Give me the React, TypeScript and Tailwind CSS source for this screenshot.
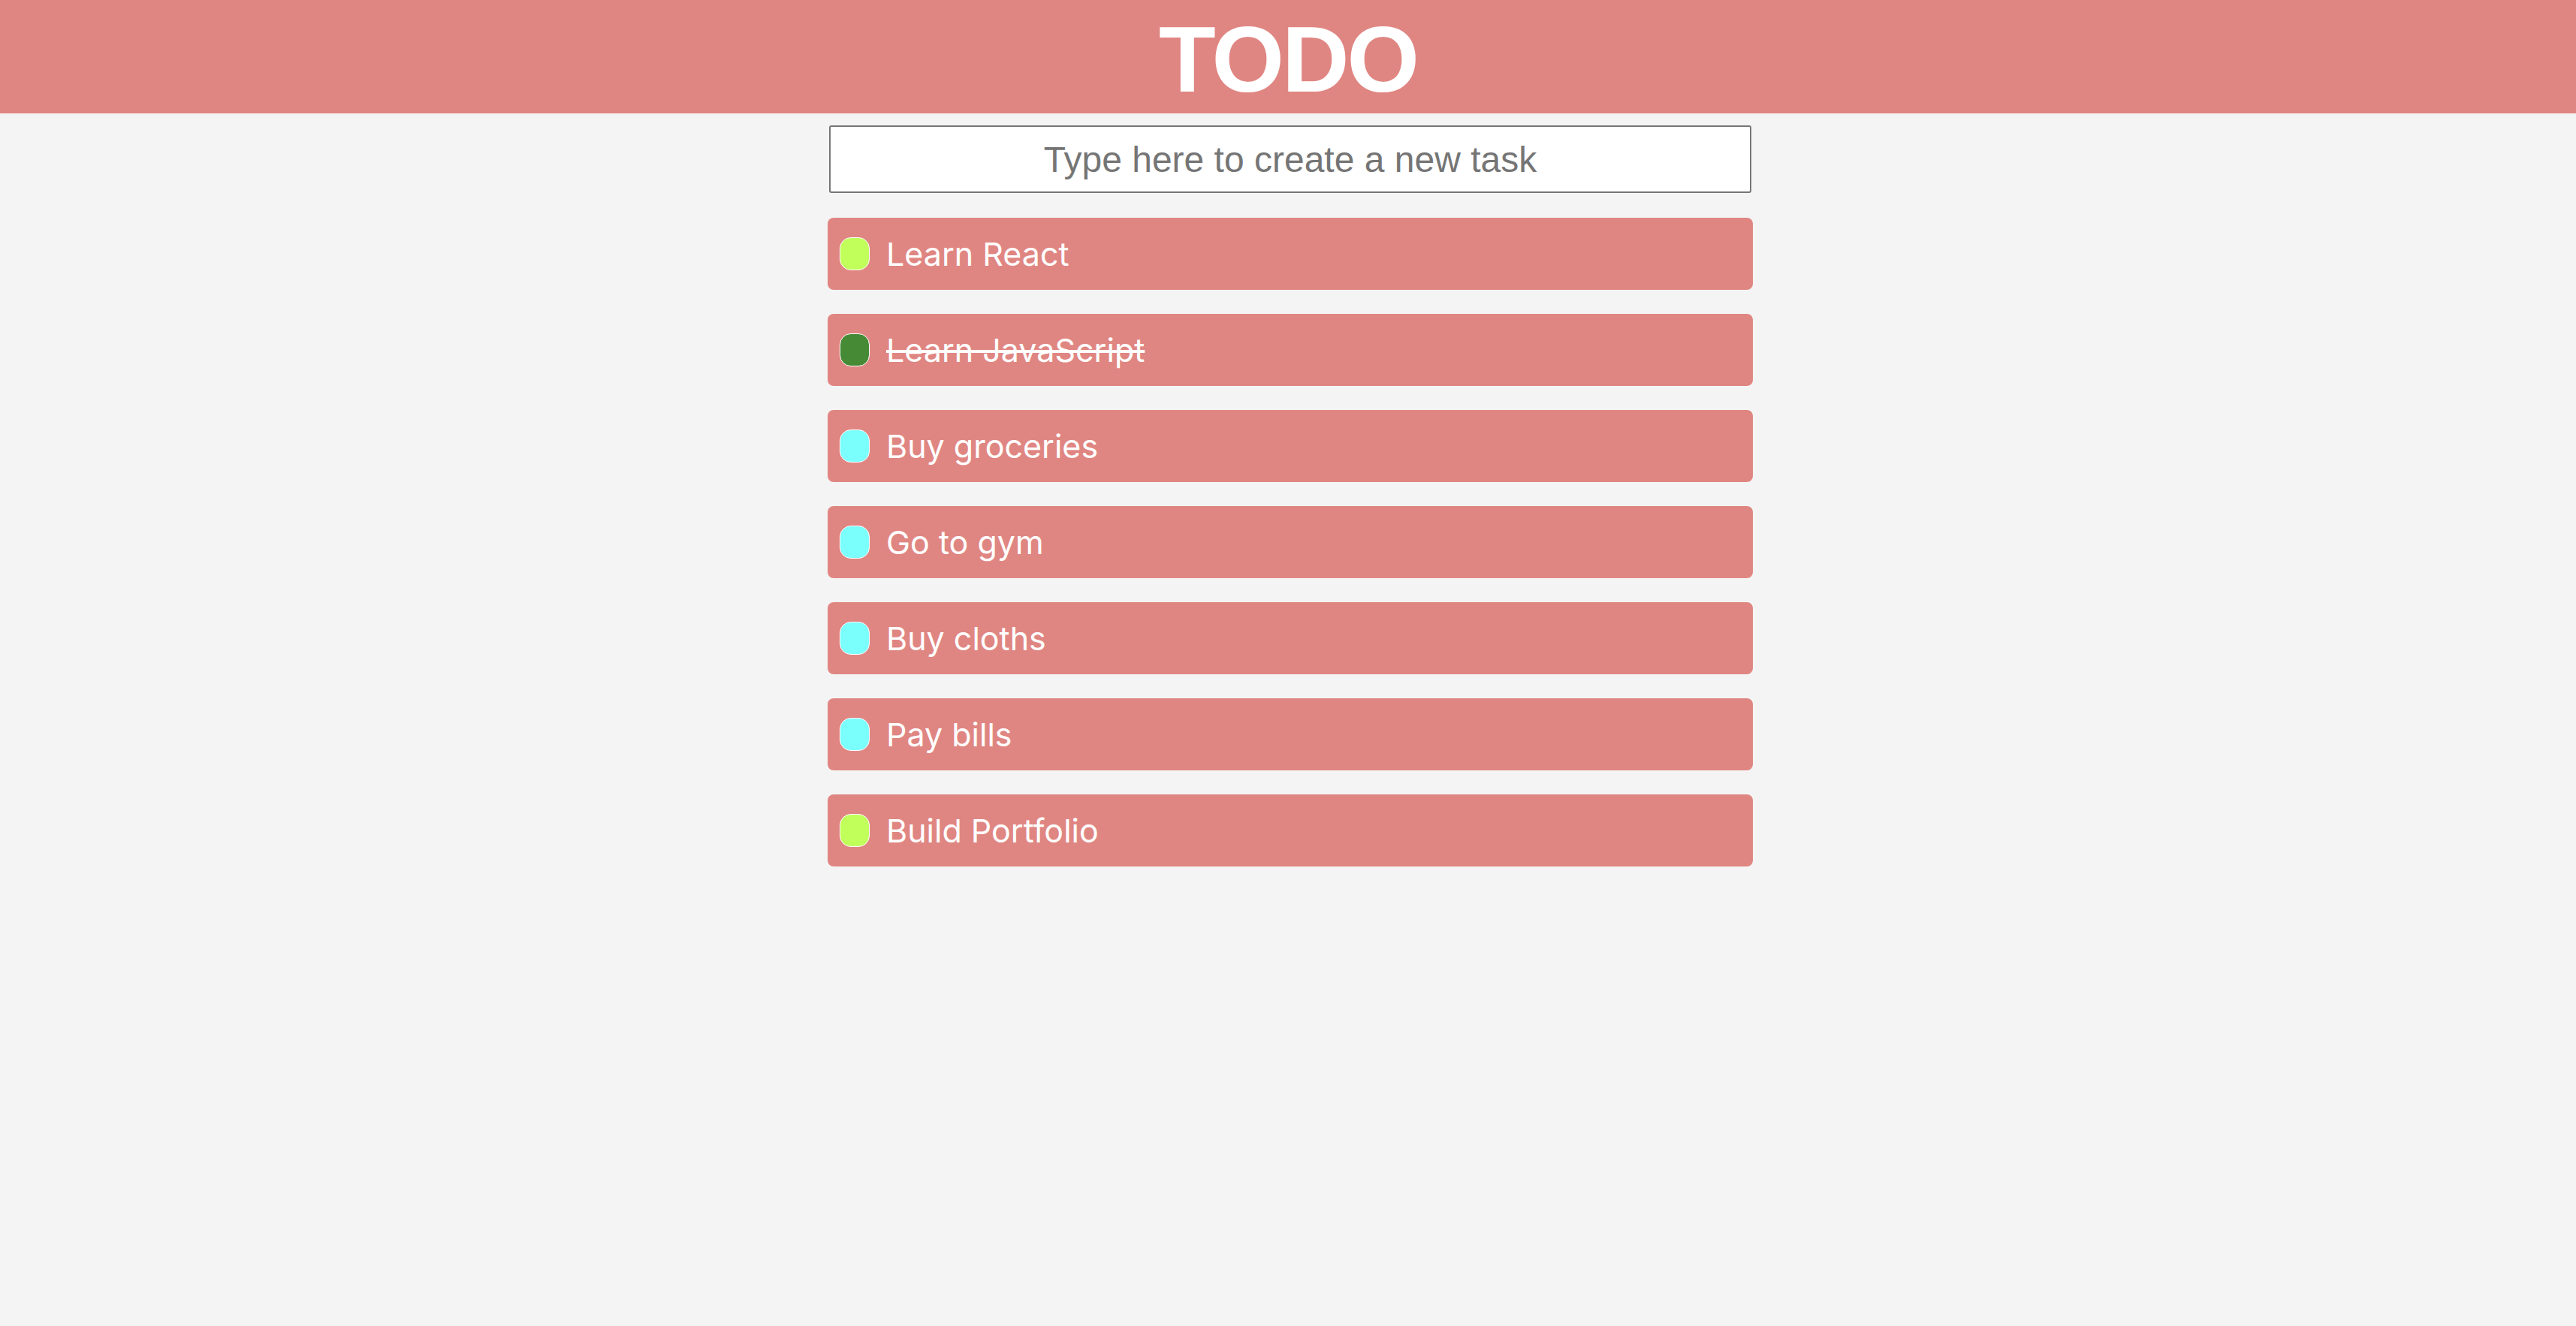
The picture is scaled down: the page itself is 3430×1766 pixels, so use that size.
import { useState } from "react";

type Task = { id: number; text: string; color: string; done?: boolean };

const TASKS: Task[] = [
  { id: 1, text: "Learn React", color: "bg-[#c1ff5b]" },
  { id: 2, text: "Learn JavaScript", color: "bg-[#478a36]", done: true },
  { id: 3, text: "Buy groceries", color: "bg-[#7bfffd]" },
  { id: 4, text: "Go to gym", color: "bg-[#7bfffd]" },
  { id: 5, text: "Buy cloths", color: "bg-[#7bfffd]" },
  { id: 6, text: "Pay bills", color: "bg-[#7bfffd]" },
  { id: 7, text: "Build Portfolio", color: "bg-[#c1ff5b]" },
];

// ============== Todo App =================
export default function App() {
  const [value, setValue] = useState("");

  return (
    <div className="min-h-screen bg-[#f4f4f4]">
      {/* Header */}
      <header className="h-[151px] bg-[#e08682] flex items-center justify-center">
        <h1 className="pt-[6px] text-[124px] leading-none font-bold text-white tracking-[-3px] font-['Liberation_Sans',Arial,sans-serif]">
          TODO
        </h1>
      </header>

      <main className="w-[1232px] mx-auto pl-[6px] box-content pt-4">
        {/* New task input */}
        <input
          value={value}
          onChange={(e) => setValue(e.target.value)}
          placeholder="Type here to create a new task"
          className="block w-[1228px] mx-auto h-[90px] bg-white border-2 border-[#767676] rounded-[3px] text-center text-[48px] text-[#333] placeholder:text-[#757575] font-['Liberation_Sans',Arial,sans-serif] outline-none"
        />

        {/* Task list */}
        <ul className="mt-[33px] flex flex-col gap-8">
          {TASKS.map((t) => (
            <li
              key={t.id}
              className="h-24 rounded-lg bg-[#e08682] flex items-center gap-[22px] px-4"
            >
              <span className={`w-10 h-11 rounded-[15px] border-[1.5px] border-white ${t.color}`} />
              <span
                className={`text-[43px] text-white font-['Inter',sans-serif] ${
                  t.done ? "line-through" : ""
                }`}
              >
                {t.text}
              </span>
            </li>
          ))}
        </ul>
      </main>
    </div>
  );
}
